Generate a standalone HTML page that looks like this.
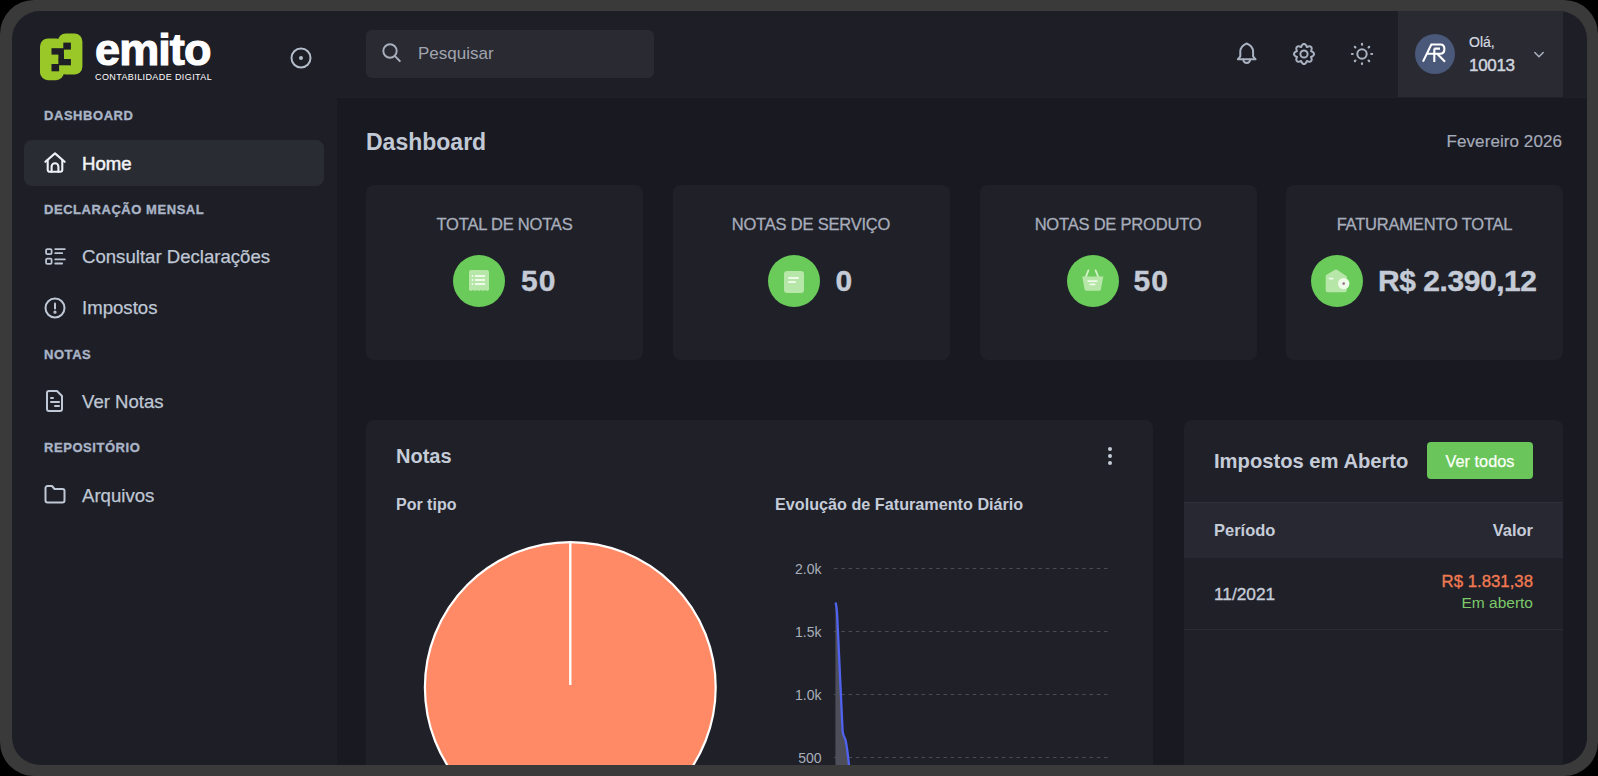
<!DOCTYPE html>
<html><head><meta charset="utf-8">
<style>
*{margin:0;padding:0;box-sizing:border-box}
html,body{width:1598px;height:776px;overflow:hidden;background:#000;font-family:"Liberation Sans",sans-serif}
.frame{position:absolute;left:0;top:0;width:1598px;height:776px;border-radius:34px;background:#3a3a3a}
.app{position:absolute;left:12px;top:11px;width:1575px;height:754px;border-radius:28px;background:#1e1e26;overflow:hidden}
.a{position:absolute;white-space:nowrap}
.main{position:absolute;left:324.5px;top:86px;right:0;bottom:0;background:#191922;border-top:1px solid #202028}
.lbl{font-size:13px;font-weight:bold;letter-spacing:0.55px;color:#a9b4c6;-webkit-text-stroke:0.35px currentColor}
.mi{font-size:18.6px;color:#bfc7d4;-webkit-text-stroke:0.25px currentColor}
.card{position:absolute;top:174px;width:277px;height:175px;background:#1f2028;border-radius:8px}
.ct{position:absolute;left:0;right:0;top:30px;text-align:center;font-size:16.5px;color:#a8aebb;letter-spacing:-0.2px;-webkit-text-stroke:0.3px currentColor}
.circ{position:absolute;width:52px;height:52px;border-radius:50%;background:#6acb5a;top:70px}
.num{position:absolute;top:79px;font-size:30px;font-weight:bold;color:#c4cbd7;letter-spacing:1px;-webkit-text-stroke:0.4px currentColor}
.panel{position:absolute;background:#1f2028;border-radius:8px}
.ico{position:absolute}
</style></head><body>
<div class="frame"></div>
<div class="app">
  <!-- sidebar logo -->
  <svg class="ico" style="left:28px;top:22px" width="46" height="50" viewBox="40 33 46 50">
    <rect x="57.8" y="33.4" width="24.6" height="41.2" rx="8" fill="#9bc829"/>
    <rect x="40" y="38.5" width="24" height="41.7" rx="8" fill="#9bc829"/>
    <g fill="#1e1e26">
      <rect x="63.3" y="42.6" width="7.6" height="7"/>
      <rect x="51.5" y="48.2" width="12.4" height="6.4"/>
      <rect x="58.4" y="53.5" width="5.6" height="6.4"/>
      <rect x="58.4" y="59" width="12.5" height="6.3"/>
      <rect x="51.5" y="64" width="7.6" height="7.3"/>
    </g>
  </svg>
  <div class="a" style="left:83px;top:13px;font-size:45px;font-weight:bold;color:#fff;letter-spacing:-0.9px;-webkit-text-stroke:1.2px #fff">emito</div>
  <div class="a" style="left:83px;top:61px;font-size:9px;color:#fff;letter-spacing:0.4px">CONTABILIDADE DIGITAL</div>
  <svg class="ico" style="left:278px;top:36px" width="22" height="22" viewBox="0 0 22 22"><circle cx="11" cy="11" r="9.5" fill="none" stroke="#b4bdca" stroke-width="2"/><circle cx="11" cy="11" r="2" fill="#b4bdca"/></svg>

  <div class="a lbl" style="left:32px;top:97px">DASHBOARD</div>
  <div class="a" style="left:12px;top:129px;width:300px;height:46px;border-radius:8px;background:#2a2c34"></div>
  <svg class="ico" style="left:32px;top:141px" width="22" height="22" viewBox="0 0 22 22" fill="none" stroke="#eef1f5" stroke-width="2.1" stroke-linecap="round" stroke-linejoin="round"><path d="M1.4 9.8L11 1.4L20.6 9.8"/><path d="M3.7 8V17.8a2 2 0 0 0 2 2H16.3a2 2 0 0 0 2-2V8"/><path d="M7.6 19.8V14.6a3.4 3.4 0 0 1 6.8 0V19.8"/></svg>
  <div class="a mi" style="left:70px;top:142px;color:#f2f4f7;-webkit-text-stroke:0.5px currentColor">Home</div>

  <div class="a lbl" style="left:32px;top:191px">DECLARAÇÃO MENSAL</div>
  <svg class="ico" style="left:32px;top:235px" width="22" height="20" viewBox="0 0 22 20" fill="none" stroke="#bcc5d3" stroke-width="1.8" stroke-linecap="round"><rect x="2.1" y="3.1" width="5.5" height="5.1" rx="1.2"/><rect x="2.1" y="12.6" width="5.5" height="5.3" rx="1.2"/><path d="M11.2 3.1h9.6M11.2 7.2h7M11.2 13.4h9.6M11.2 17.5h7"/></svg>
  <div class="a mi" style="left:70px;top:235px">Consultar Declarações</div>
  <svg class="ico" style="left:32px;top:285.5px" width="22" height="22" viewBox="0 0 22 22" fill="none" stroke="#c0c8d6" stroke-width="2" stroke-linecap="round"><circle cx="11" cy="11" r="9.5"/><path d="M11 6.5v5"/><circle cx="11" cy="15.2" r="0.6" fill="#c0c8d6"/></svg>
  <div class="a mi" style="left:70px;top:286px">Impostos</div>

  <div class="a lbl" style="left:32px;top:336px">NOTAS</div>
  <svg class="ico" style="left:33px;top:379px" width="20" height="22" viewBox="0 0 20 22" fill="none" stroke="#c0c8d6" stroke-width="2" stroke-linecap="round" stroke-linejoin="round"><path d="M4 1h8l5 5v13a2 2 0 0 1-2 2H4a2 2 0 0 1-2-2V3a2 2 0 0 1 2-2z"/><path d="M6 8h2M6 12h8M10 16h4"/></svg>
  <div class="a mi" style="left:70px;top:380px">Ver Notas</div>

  <div class="a lbl" style="left:32px;top:429px">REPOSITÓRIO</div>
  <svg class="ico" style="left:32px;top:474px" width="22" height="19" viewBox="0 0 22 19" fill="none" stroke="#c0c8d6" stroke-width="2" stroke-linejoin="round"><path d="M1.5 3a2 2 0 0 1 2-2h4.5l2.5 3h8a2 2 0 0 1 2 2v9.5a2 2 0 0 1-2 2h-15a2 2 0 0 1-2-2z"/></svg>
  <div class="a mi" style="left:70px;top:474px">Arquivos</div>

  <!-- header -->
  <div class="a" style="left:354px;top:19px;width:288px;height:48px;border-radius:6px;background:#2a2a33"></div>
  <svg class="ico" style="left:369.2px;top:31.2px" width="22" height="22" viewBox="0 0 22 22" fill="none" stroke="#a9b0bc" stroke-width="1.9" stroke-linecap="round"><circle cx="9" cy="9" r="6.7"/><path d="M14.2 14.4 18.8 19"/></svg>
  <div class="a" style="left:406px;top:33px;font-size:17px;color:#a0a5ae">Pesquisar</div>

  <svg class="ico" style="left:1223px;top:30px" width="24" height="24" viewBox="0 0 24 24" fill="none" stroke="#a9b2c1" stroke-width="2" stroke-linecap="round" stroke-linejoin="round"><path d="M2.8 18.3L5.3 15.3V10.8C5.3 6.8 8 4 11.7 2.5C15.4 4 18.1 6.8 18.1 10.8V15.3L20.6 18.3Z"/><path d="M8.3 18.6A3.4 3.4 0 0 0 15.1 18.6"/></svg>
  <svg class="ico" style="left:1280px;top:30.5px" width="24" height="24" viewBox="0 0 24 24" fill="none" stroke="#a9b2c1" stroke-width="2" stroke-linejoin="round"><path d="M12.00 2.00 L12.39 2.04 L12.77 2.16 L13.14 2.37 L13.48 2.64 L13.80 2.97 L14.08 3.35 L14.32 3.77 L14.53 4.21 L14.71 4.66 L14.87 5.07 L15.28 4.89 L15.72 4.71 L16.18 4.54 L16.65 4.42 L17.12 4.34 L17.57 4.33 L18.01 4.38 L18.41 4.50 L18.77 4.68 L19.07 4.93 L19.32 5.23 L19.50 5.59 L19.62 5.99 L19.67 6.43 L19.66 6.88 L19.58 7.35 L19.46 7.82 L19.29 8.28 L19.11 8.72 L18.93 9.13 L19.34 9.29 L19.79 9.47 L20.23 9.68 L20.65 9.92 L21.03 10.20 L21.36 10.52 L21.63 10.86 L21.84 11.23 L21.96 11.61 L22.00 12.00 L21.96 12.39 L21.84 12.77 L21.63 13.14 L21.36 13.48 L21.03 13.80 L20.65 14.08 L20.23 14.32 L19.79 14.53 L19.34 14.71 L18.93 14.87 L19.11 15.28 L19.29 15.72 L19.46 16.18 L19.58 16.65 L19.66 17.12 L19.67 17.57 L19.62 18.01 L19.50 18.41 L19.32 18.77 L19.07 19.07 L18.77 19.32 L18.41 19.50 L18.01 19.62 L17.57 19.67 L17.12 19.66 L16.65 19.58 L16.18 19.46 L15.72 19.29 L15.28 19.11 L14.87 18.93 L14.71 19.34 L14.53 19.79 L14.32 20.23 L14.08 20.65 L13.80 21.03 L13.48 21.36 L13.14 21.63 L12.77 21.84 L12.39 21.96 L12.00 22.00 L11.61 21.96 L11.23 21.84 L10.86 21.63 L10.52 21.36 L10.20 21.03 L9.92 20.65 L9.68 20.23 L9.47 19.79 L9.29 19.34 L9.13 18.93 L8.72 19.11 L8.28 19.29 L7.82 19.46 L7.35 19.58 L6.88 19.66 L6.43 19.67 L5.99 19.62 L5.59 19.50 L5.23 19.32 L4.93 19.07 L4.68 18.77 L4.50 18.41 L4.38 18.01 L4.33 17.57 L4.34 17.12 L4.42 16.65 L4.54 16.18 L4.71 15.72 L4.89 15.28 L5.07 14.87 L4.66 14.71 L4.21 14.53 L3.77 14.32 L3.35 14.08 L2.97 13.80 L2.64 13.48 L2.37 13.14 L2.16 12.77 L2.04 12.39 L2.00 12.00 L2.04 11.61 L2.16 11.23 L2.37 10.86 L2.64 10.52 L2.97 10.20 L3.35 9.92 L3.77 9.68 L4.21 9.47 L4.66 9.29 L5.07 9.13 L4.89 8.72 L4.71 8.28 L4.54 7.82 L4.42 7.35 L4.34 6.88 L4.33 6.43 L4.38 5.99 L4.50 5.59 L4.68 5.23 L4.93 4.93 L5.23 4.68 L5.59 4.50 L5.99 4.38 L6.43 4.33 L6.88 4.34 L7.35 4.42 L7.82 4.54 L8.28 4.71 L8.72 4.89 L9.13 5.07 L9.29 4.66 L9.47 4.21 L9.68 3.77 L9.92 3.35 L10.20 2.97 L10.52 2.64 L10.86 2.37 L11.23 2.16 L11.61 2.04Z"/><circle cx="12" cy="12" r="3.6"/></svg>
  <svg class="ico" style="left:1337.5px;top:30.5px" width="24" height="24" viewBox="0 0 24 24" fill="none" stroke="#a9b2c1" stroke-width="2.2" stroke-linecap="round"><circle cx="12" cy="12" r="4.7" stroke-width="2"/><path d="M21.30 12.00L22.10 12.00M18.58 18.58L19.14 19.14M12.00 21.30L12.00 22.10M5.42 18.58L4.86 19.14M2.70 12.00L1.90 12.00M5.42 5.42L4.86 4.86M12.00 2.70L12.00 1.90M18.58 5.42L19.14 4.86"/></svg>

  <div class="a" style="left:1386px;top:0;width:165px;height:86px;background:#2a2a33"></div>
  <svg class="ico" style="left:1402.6px;top:23px" width="40" height="40" viewBox="0 0 40 40"><circle cx="20" cy="20" r="20" fill="#4a5879"/><g fill="none" stroke="#fff" stroke-width="2.1" stroke-linejoin="miter"><path d="M8 27.6L16.3 10.5H25.6C28 10.5 29.4 12.6 29.4 15.1C29.4 17.8 27.8 19.8 25.2 19.8H12.3"/><path d="M19.3 14.6H25"/><path d="M19.3 14.6V27.9"/><path d="M22.2 19.8L30 27.7"/></g></svg>
  <div class="a" style="left:1457px;top:23px;font-size:14px;color:#d5dae2;-webkit-text-stroke:0.2px currentColor">Olá,</div>
  <div class="a" style="left:1457px;top:45px;font-size:17px;color:#cfd5de;letter-spacing:-0.3px;-webkit-text-stroke:0.45px currentColor">10013</div>
  <svg class="ico" style="left:1520.5px;top:40px" width="12" height="8" viewBox="0 0 12 8" fill="none" stroke="#a9b2c1" stroke-width="1.5" stroke-linecap="round"><path d="M1.8 1.5 6 5.7l4.2-4.2"/></svg>

  <!-- main -->
  <div class="main"></div>
  <div class="a" style="left:354px;top:118px;font-size:23px;font-weight:bold;color:#c2c9d5">Dashboard</div>
  <div class="a" style="right:25px;top:121px;font-size:17px;color:#a5abb8;letter-spacing:0.08px;-webkit-text-stroke:0.2px currentColor">Fevereiro 2026</div>

  <div class="card" style="left:354px">
    <div class="ct">TOTAL DE NOTAS</div>
    <div class="circ" style="left:87px"><svg width="52" height="52" viewBox="0 0 52 52"><path d="M16 17a2 2 0 0 1 2-2h16a2 2 0 0 1 2 2v18l-2 1-2-1-2 1-2-1-2 1-2-1-2 1-2-1-2 1-2-1z" fill="#b6e6a8"/><g fill="#eefbe8"><rect x="22" y="20" width="10" height="2"/><rect x="22" y="24" width="10" height="2"/><rect x="22" y="28" width="10" height="2"/><circle cx="19.5" cy="21" r="1"/><circle cx="19.5" cy="25" r="1"/><circle cx="19.5" cy="29" r="1"/></g></svg></div>
    <div class="num" style="left:155px">50</div>
  </div>
  <div class="card" style="left:660.5px">
    <div class="ct">NOTAS DE SERVIÇO</div>
    <div class="circ" style="left:95px"><svg width="52" height="52" viewBox="0 0 52 52"><rect x="16" y="16" width="20" height="22" rx="3" fill="#b6e6a8"/><g fill="#eefbe8"><rect x="20" y="22" width="11" height="2" rx="1"/><rect x="20" y="26" width="8" height="2" rx="1"/></g></svg></div>
    <div class="num" style="left:163px">0</div>
  </div>
  <div class="card" style="left:967.5px">
    <div class="ct">NOTAS DE PRODUTO</div>
    <div class="circ" style="left:87px"><svg width="52" height="52" viewBox="0 0 52 52"><path d="M21.4 15.4L18.6 22.6M28.6 15.4L31.6 22.6" stroke="#d4f0c8" stroke-width="1.8" stroke-linecap="round"/><path d="M15.2 21.6h21.1l-2.4 12.6a2 2 0 0 1-2 1.6H19.6a2 2 0 0 1-2-1.6z" fill="#b6e6a8"/><g fill="#eefbe8"><rect x="20.3" y="25.2" width="10.3" height="1.8" rx="0.9"/><rect x="22.4" y="28.5" width="6.2" height="1.8" rx="0.9"/></g></svg></div>
    <div class="num" style="left:154px">50</div>
  </div>
  <div class="card" style="left:1274px">
    <div class="ct">FATURAMENTO TOTAL</div>
    <div class="circ" style="left:25px"><svg width="52" height="52" viewBox="0 0 52 52"><path d="M15.5 19.8L24 14.8a2 2 0 0 1 2 0L35.8 21.2V35.3a2 2 0 0 1-2 2H16.7a2 2 0 0 1-2-2V21.6a2 2 0 0 1 .8-1.8z" fill="#b6e6a8"/><rect x="17.6" y="22.8" width="5" height="1.6" rx="0.8" fill="#eefbe8"/><circle cx="32.7" cy="28.6" r="5.7" fill="#eefbe8"/><circle cx="32.7" cy="28.6" r="1.3" fill="#9a6a8e"/></svg></div>
    <div class="num" style="left:92px;letter-spacing:-0.45px">R$ 2.390,12</div>
  </div>

  <!-- notas panel -->
  <div class="panel" style="left:353.5px;top:409px;width:787.5px;height:400px"></div>
  <div class="a" style="left:384px;top:434px;font-size:20px;font-weight:bold;color:#c5ccd8">Notas</div>
  <svg class="ico" style="left:1094px;top:435px" width="8" height="20" viewBox="0 0 8 20"><circle cx="4" cy="3" r="2" fill="#c5ccd8"/><circle cx="4" cy="10" r="2" fill="#c5ccd8"/><circle cx="4" cy="17" r="2" fill="#c5ccd8"/></svg>
  <div class="a" style="left:384px;top:484.5px;font-size:16px;font-weight:bold;color:#c5ccd8">Por tipo</div>
  <div class="a" style="left:763px;top:483.5px;font-size:16.2px;font-weight:bold;color:#c5ccd8">Evolução de Faturamento Diário</div>
  <svg class="ico" style="left:398px;top:515px" width="320" height="300" viewBox="398 515 320 300">
    <circle cx="558.3" cy="676.5" r="145.4" fill="#ff8a65" stroke="#fff" stroke-width="2.2"/>
    <path d="M558.3 674V531" stroke="#fff" stroke-width="2.4"/>
  </svg>
  <svg class="ico" style="left:770px;top:540px" width="380" height="230" viewBox="782 551 380 230">
    <g fill="#a9afba" font-family="Liberation Sans" font-size="14" text-anchor="end">
      <text x="821.5" y="574">2.0k</text><text x="821.5" y="637">1.5k</text><text x="821.5" y="700">1.0k</text><text x="821.5" y="763">500</text>
    </g>
    <g stroke="#4a4b55" stroke-width="1.2" stroke-dasharray="3.5 3.8">
      <path d="M834 568.5H1110M834 631.5H1110M834 694.5H1110M834 757.5H1110"/>
    </g>
    <path d="M835.4 602.5 C836.2 604 836.8 608 837.2 616 L842.6 731 C843 735 843.8 736.5 845 738.5 C846.5 742 847.5 750 849.5 770 L835.4 770z" fill="#4e4e5a"/>
    <path d="M835.4 602.5 C836.2 604 836.8 608 837.2 616 L842.6 731 C843 735 843.8 736.5 845 738.5 C846.5 742 847.5 750 849.5 770" fill="none" stroke="#4f63f0" stroke-width="2.3"/>
  </svg>

  <!-- impostos panel -->
  <div class="panel" style="left:1172px;top:409px;width:379px;height:400px;overflow:hidden">
    <div style="position:absolute;left:0;right:0;top:82px;height:1px;background:#2e2f38"></div>
    <div style="position:absolute;left:0;right:0;top:83px;height:55px;background:#272832"></div>
    <div style="position:absolute;left:0;right:0;top:209px;height:1px;background:#2a2b33"></div>
  </div>
  <div class="a" style="left:1202px;top:438.5px;font-size:20.2px;font-weight:bold;color:#c5ccd8">Impostos em Aberto</div>
  <div class="a" style="left:1415px;top:431px;width:106px;height:37px;border-radius:4px;background:#6ac65a"></div>
  <div class="a" style="left:1415px;top:441px;width:106px;text-align:center;font-size:16.3px;color:#fbfff8;-webkit-text-stroke:0.25px currentColor">Ver todos</div>
  <div class="a" style="left:1202px;top:510px;font-size:16.5px;font-weight:bold;color:#c5ccd8">Período</div>
  <div class="a" style="right:54px;top:510px;font-size:16.5px;font-weight:bold;color:#c5ccd8">Valor</div>
  <div class="a" style="left:1202px;top:573px;font-size:17.3px;color:#c5ccd8;-webkit-text-stroke:0.35px currentColor">11/2021</div>
  <div class="a" style="right:54px;top:561px;font-size:16.8px;color:#f07a52;-webkit-text-stroke:0.35px currentColor">R$ 1.831,38</div>
  <div class="a" style="right:54px;top:583px;font-size:15.5px;color:#7cc96a">Em aberto</div>
</div>
</body></html>
